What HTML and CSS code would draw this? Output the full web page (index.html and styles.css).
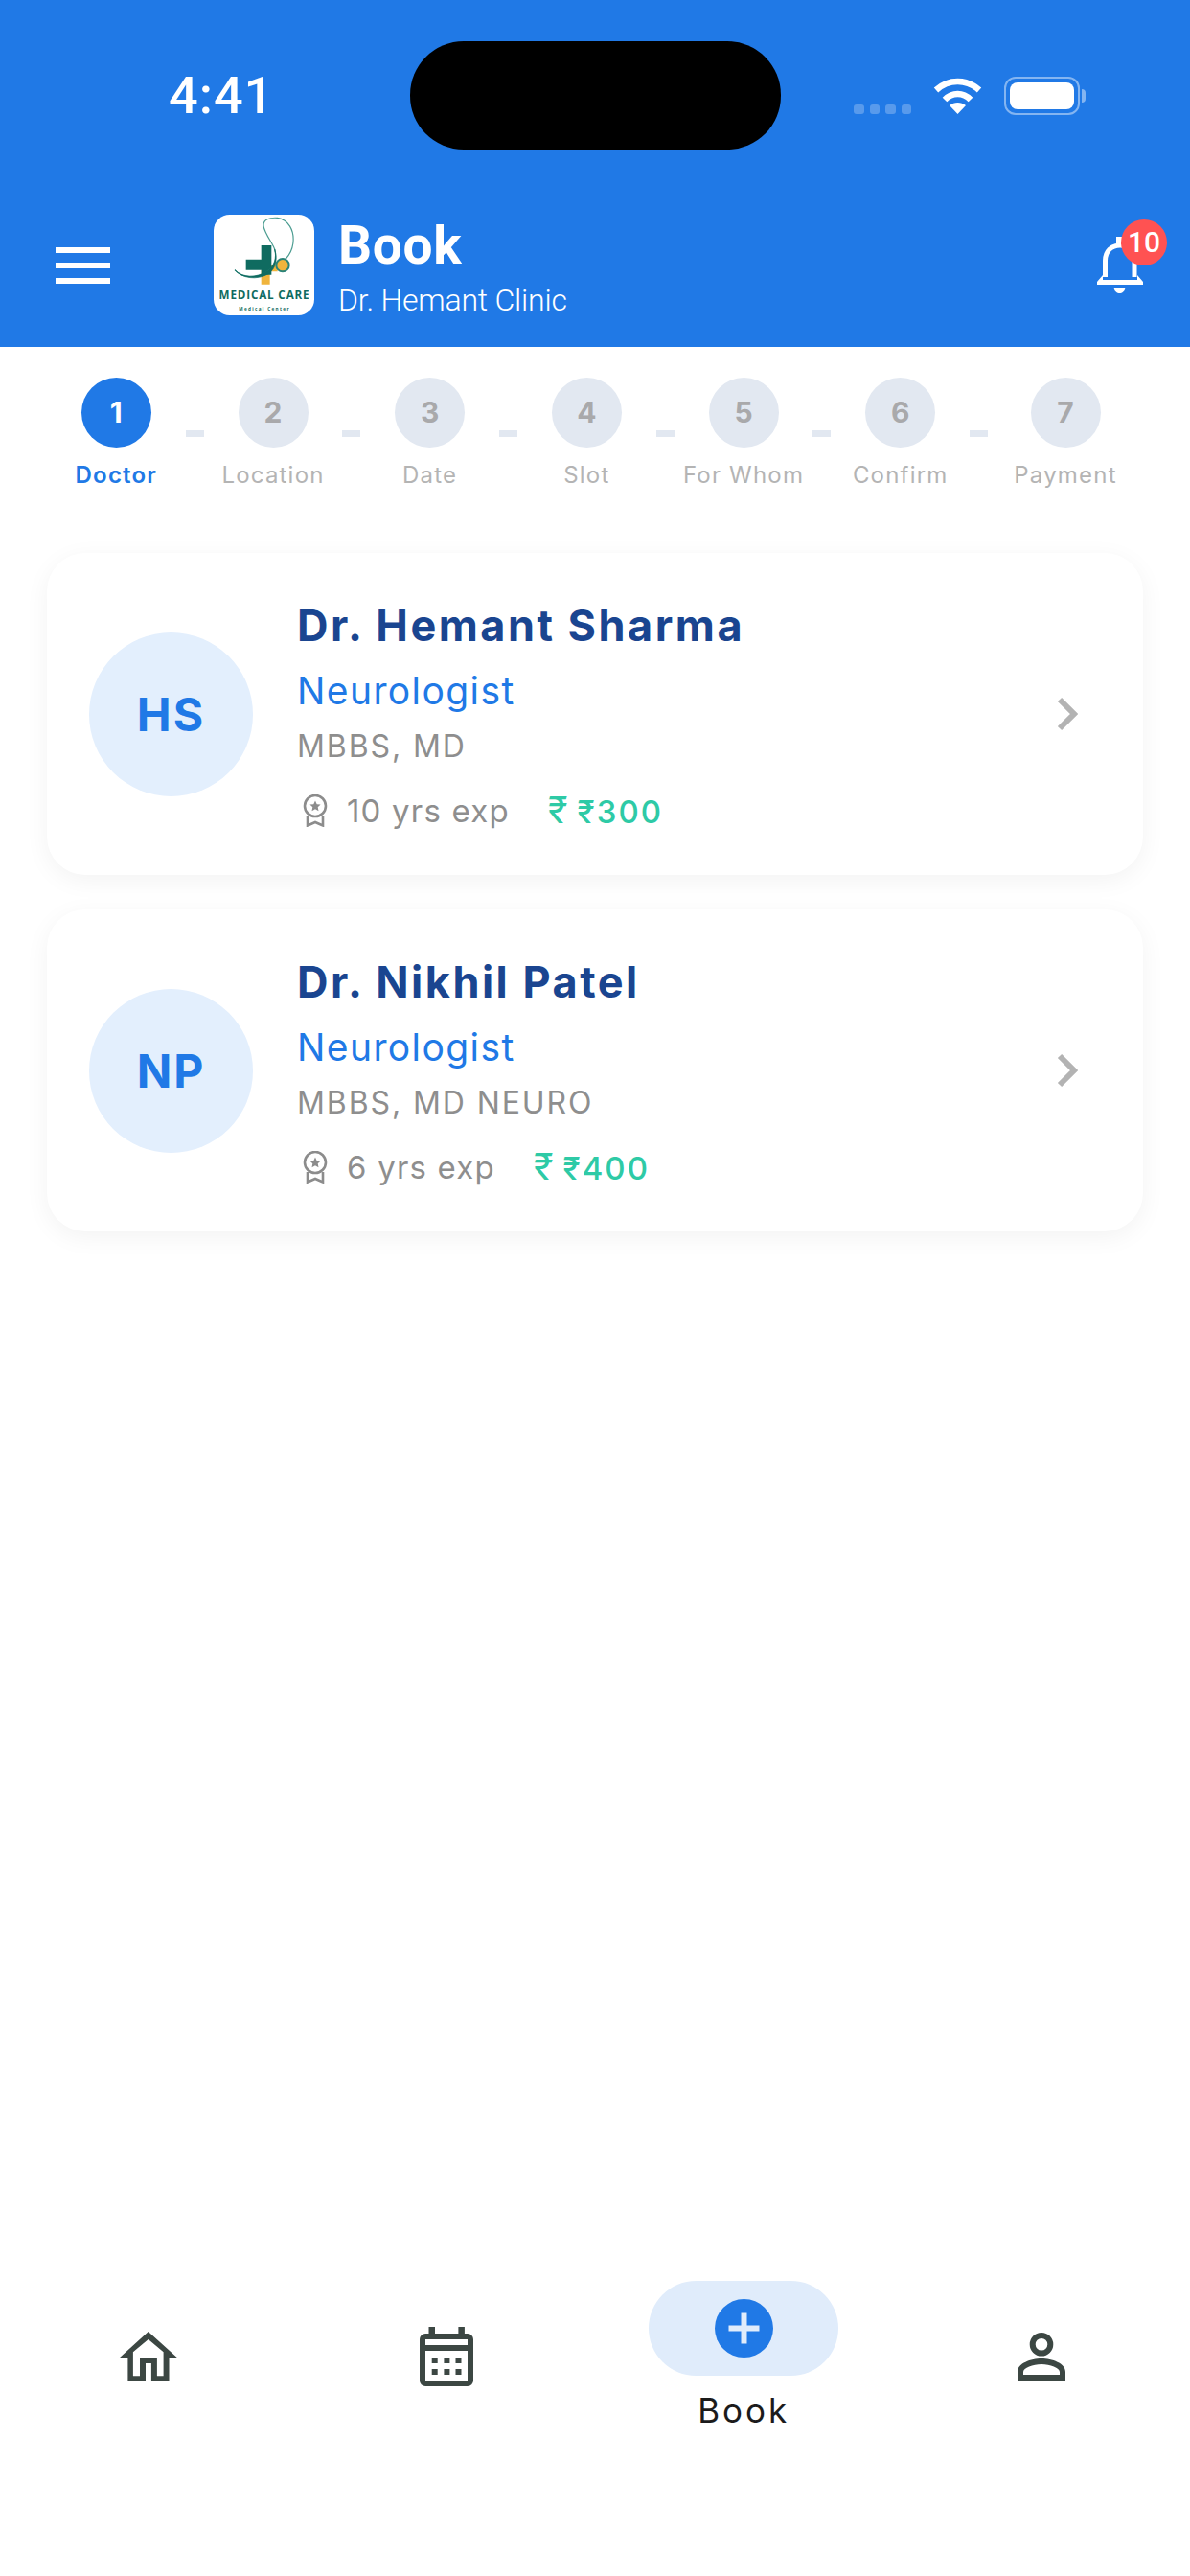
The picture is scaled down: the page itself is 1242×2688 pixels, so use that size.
FILE: index.html
```html
<!DOCTYPE html>
<html lang="en">
<head>
  <meta charset="UTF-8">
  <title>Book</title>
  <link rel="stylesheet" href="styles.css">
</head>
<body>

  <!-- Blue header -->
  <header class="header">
    <div class="statusbar">
      <div class="time">4:41</div>
      <div class="island"></div>
      <div class="status-icons">
        <div class="signal"><span></span><span></span><span></span><span></span></div>
        <svg class="wifi" viewBox="0 0 51 38">
          <path class="wifi-arc" d="M3 13C16 1 35 1 48 13"/>
          <path class="wifi-arc" d="M12 23C20 15 31 15 39 23"/>
          <path class="wifi-dot" d="M25.5 38L17 29C22 25 29 25 34 29Z"/>
        </svg>
        <div class="battery"><div class="battery-fill"></div></div>
        <div class="battery-nub"></div>
      </div>
    </div>

    <div class="topbar">
      <div class="menu"><span></span><span></span><span></span></div>
      <svg class="logo" viewBox="0 0 315 315">
        <rect width="315" height="315" rx="50" fill="#fff"/>
        <path d="M149 173H176V158H200V178H176V218H149Z" fill="#f0b43c"/>
        <path d="M149 96H181V188H149V173H101V140H149Z" fill="#0f6b60"/>
        <path d="M66 173C90 200 135 200 165 180C190 165 200 140 191 108C185 90 160 60 156 35C155 15 175 8 200 10C235 15 252 50 249 85C247 110 238 125 226 138" fill="none" stroke="#4a9c90" stroke-width="3.5"/>
        <path d="M66 173C90 198 135 198 165 178C190 162 198 135 191 108C198 135 200 165 170 186C135 205 90 200 66 173Z" fill="#0f6b60" stroke="#0f6b60" stroke-width="2"/>
        <circle cx="216" cy="158" r="20" fill="#f0b43c" stroke="#2a8377" stroke-width="6"/>
        <text class="logo-name" x="159" y="263">MEDICAL CARE</text>
        <text class="logo-sub" x="159" y="300">Medical Center</text>
      </svg>
      <div class="titles">
        <div class="title">Book</div>
        <div class="subtitle">Dr. Hemant Clinic</div>
      </div>
      <div class="bell">
        <svg class="bell-icon" viewBox="0 0 50 59">
          <path d="M21 0H28V9H21Z" fill="#fff"/>
          <path d="M9.5 42V25C9.5 15 16 9 25 9C34 9 40 15 40 25V42" fill="none" stroke="#fff" stroke-width="5"/>
          <path d="M1 47L7 40V45H43V40L49 47V50H1Z" fill="#fff"/>
          <path d="M18.5 53H30.5C30 57 27 59 24.5 59C22 59 19 57 18.5 53Z" fill="#fff"/>
        </svg>
        <div class="badge">10</div>
      </div>
    </div>
  </header>

  <!-- Booking steps -->
  <div class="steps">
    <div class="step active">
      <div class="step-num">1</div>
      <div class="step-label">Doctor</div>
    </div>
    <div class="step-line"></div>
    <div class="step">
      <div class="step-num">2</div>
      <div class="step-label">Location</div>
    </div>
    <div class="step-line"></div>
    <div class="step">
      <div class="step-num">3</div>
      <div class="step-label">Date</div>
    </div>
    <div class="step-line"></div>
    <div class="step">
      <div class="step-num">4</div>
      <div class="step-label">Slot</div>
    </div>
    <div class="step-line"></div>
    <div class="step">
      <div class="step-num">5</div>
      <div class="step-label">For Whom</div>
    </div>
    <div class="step-line"></div>
    <div class="step">
      <div class="step-num">6</div>
      <div class="step-label">Confirm</div>
    </div>
    <div class="step-line"></div>
    <div class="step step-last">
      <div class="step-num">7</div>
      <div class="step-label">Payment</div>
    </div>
  </div>

  <!-- Doctors -->
  <main class="doctors">
    <div class="card">
      <div class="avatar">HS</div>
      <div class="info">
        <div class="name">Dr. Hemant Sharma</div>
        <div class="speciality">Neurologist</div>
        <div class="degree">MBBS, MD</div>
        <div class="meta">
          <svg class="award" viewBox="0 0 28 34">
            <circle cx="14" cy="12" r="11" fill="none" stroke="#8c8c8c" stroke-width="2.6"/>
            <path d="M14 6.5L15.7 10.2L19.6 10.6L16.7 13.2L17.5 17.2L14 15.2L10.5 17.2L11.3 13.2L8.4 10.6L12.3 10.2Z" fill="#8c8c8c"/>
            <path d="M6 22V32.5L14 29L22 32.5V22" fill="none" stroke="#8c8c8c" stroke-width="2.6"/>
          </svg>
          <span class="exp">10 yrs exp</span>
          <span class="fee"><span class="fee-icon">₹</span>₹300</span>
        </div>
      </div>
      <svg class="chevron" viewBox="0 0 22 36"><path d="M3 3L18 18L3 33" fill="none" stroke="#b3b3b3" stroke-width="6"/></svg>
    </div>

    <div class="card">
      <div class="avatar">NP</div>
      <div class="info">
        <div class="name">Dr. Nikhil Patel</div>
        <div class="speciality">Neurologist</div>
        <div class="degree">MBBS, MD NEURO</div>
        <div class="meta">
          <svg class="award" viewBox="0 0 28 34">
            <circle cx="14" cy="12" r="11" fill="none" stroke="#8c8c8c" stroke-width="2.6"/>
            <path d="M14 6.5L15.7 10.2L19.6 10.6L16.7 13.2L17.5 17.2L14 15.2L10.5 17.2L11.3 13.2L8.4 10.6L12.3 10.2Z" fill="#8c8c8c"/>
            <path d="M6 22V32.5L14 29L22 32.5V22" fill="none" stroke="#8c8c8c" stroke-width="2.6"/>
          </svg>
          <span class="exp">6 yrs exp</span>
          <span class="fee"><span class="fee-icon">₹</span>₹400</span>
        </div>
      </div>
      <svg class="chevron" viewBox="0 0 22 36"><path d="M3 3L18 18L3 33" fill="none" stroke="#b3b3b3" stroke-width="6"/></svg>
    </div>
  </main>

  <!-- Bottom navigation -->
  <nav class="tabs">
    <div class="tab">
      <svg class="tab-home" viewBox="0 0 60 52">
        <path fill-rule="evenodd" fill="#3c4743" d="M29.8 0L59.8 27H51.5V52H32.9V33H27V52H8.4V27H0ZM29.8 8L13.9 21.3V46.3H21V27H38.9V46.3H45.6V21.3Z"/>
      </svg>
    </div>
    <div class="tab">
      <svg class="tab-calendar" viewBox="0 0 56 62">
        <rect x="9.5" y="0" width="6.5" height="9" fill="#3c4743"/>
        <rect x="40.4" y="0" width="6.5" height="9" fill="#3c4743"/>
        <rect x="3" y="10" width="50" height="49" rx="3" fill="none" stroke="#3c4743" stroke-width="6"/>
        <rect x="3" y="19" width="50" height="6" fill="#3c4743"/>
        <rect x="12.7" y="32" width="6" height="6" fill="#3c4743"/>
        <rect x="25.4" y="32" width="6" height="6" fill="#3c4743"/>
        <rect x="37.5" y="32" width="6" height="6" fill="#3c4743"/>
        <rect x="12.7" y="44" width="6" height="6" fill="#3c4743"/>
        <rect x="25.4" y="44" width="6" height="6" fill="#3c4743"/>
        <rect x="37.5" y="44" width="6" height="6" fill="#3c4743"/>
      </svg>
    </div>
    <div class="tab">
      <div class="tab-pill">
        <svg class="tab-plus" viewBox="0 0 61 61">
          <circle cx="30.5" cy="30.5" r="30.5" fill="#2079e6"/>
          <path d="M14.5 27.5H27.5V14.5H33.5V27.5H46.5V33.5H33.5V46.5H27.5V33.5H14.5Z" fill="#e0ecfb"/>
        </svg>
      </div>
      <div class="tab-label">Book</div>
    </div>
    <div class="tab">
      <svg class="tab-person" viewBox="0 0 50 50">
        <path fill-rule="evenodd" fill="#3c4743" d="M25 0A12.3 12.3 0 1 1 25 24.6A12.3 12.3 0 1 1 25 0ZM25 6A6.3 6.3 0 1 0 25 18.6A6.3 6.3 0 1 0 25 6ZM0 50V41C0 32 14 27 25 27C36 27 50 32 50 41V50ZM6 44H44V41C44 37 34 33 25 33C16 33 6 37 6 41Z"/>
      </svg>
    </div>
  </nav>

</body>
</html>
```

FILE: styles.css
```css
/* ===== Page ===== */
* {
  box-sizing: border-box;
}

body {
  margin: 0;
  width: 1242px;
  height: 2688px;
  display: flex;
  flex-direction: column;
  background-color: #ffffff;
  font-family: 'Inter', 'Liberation Sans', sans-serif;
  overflow: hidden;
}

/* ===== Header ===== */
.header {
  height: 362px;
  padding-top: 43px;
  background-color: #2079e6;
  color: #ffffff;
  font-family: 'Roboto', sans-serif;
}

.statusbar {
  display: flex;
  align-items: center;
  height: 113px;
}

.time {
  width: 428px;
  padding-left: 176px;
  font-size: 54px;
  font-weight: 500;
  letter-spacing: 1px;
}

.island {
  width: 387px;
  height: 113px;
  border-radius: 56px;
  background-color: #000000;
}

.status-icons {
  display: flex;
  align-items: flex-end;
  height: 40px;
  padding-left: 76px;
}

.signal {
  display: flex;
  gap: 6px;
  margin-bottom: 1px;
}

.signal span {
  width: 10.5px;
  height: 10px;
  border-radius: 3px;
  background-color: rgba(255, 255, 255, 0.25);
}

.wifi {
  width: 51px;
  height: 38px;
  margin: 0 23px 1px 23px;
}

.wifi-arc {
  fill: none;
  stroke: #ffffff;
  stroke-width: 6.5;
}

.wifi-dot {
  fill: #ffffff;
}

.battery {
  width: 79px;
  height: 40px;
  padding: 4px;
  border: 2.5px solid rgba(255, 255, 255, 0.45);
  border-radius: 12px;
}

.battery-fill {
  height: 100%;
  border-radius: 8px;
  background-color: #ffffff;
}

.battery-nub {
  width: 4px;
  height: 14px;
  margin: 0 0 13px 2px;
  border-radius: 0 4px 4px 0;
  background-color: rgba(255, 255, 255, 0.45);
}

.topbar {
  display: flex;
  align-items: center;
  height: 105px;
  margin-top: 68px;
  padding: 0 48px 0 58px;
}

.menu {
  display: flex;
  flex-direction: column;
  gap: 10px;
  width: 57px;
  margin-right: 108px;
}

.menu span {
  height: 6px;
  background-color: #ffffff;
}

.logo {
  width: 105px;
  height: 105px;
  margin-right: 25px;
}

.logo-name {
  font-family: 'Open Sans', sans-serif;
  font-size: 35px;
  font-weight: 700;
  letter-spacing: 2.5px;
  fill: #0f6b60;
  text-anchor: middle;
}

.logo-sub {
  font-family: 'Open Sans', sans-serif;
  font-size: 14px;
  font-weight: 700;
  letter-spacing: 4px;
  fill: #0f6b60;
  text-anchor: middle;
}

.titles {
  padding-top: 4px;
}

.title {
  font-size: 55px;
  font-weight: 700;
  letter-spacing: 0.7px;
  line-height: 60px;
}

.subtitle {
  margin-top: 8px;
  font-size: 32px;
  font-weight: 300;
  letter-spacing: -0.2px;
  line-height: 38px;
}

.bell {
  position: relative;
  width: 50px;
  height: 59px;
  margin-left: auto;
}

.bell-icon {
  display: block;
  width: 50px;
  height: 59px;
}

.badge {
  position: absolute;
  top: -18px;
  right: -24px;
  width: 48px;
  height: 48px;
  border-radius: 50%;
  background-color: #ff5252;
  font-size: 30px;
  font-weight: 500;
  line-height: 48px;
  text-align: center;
}

/* ===== Steps ===== */
.steps {
  display: flex;
  padding: 32px 49px 0;
}

.step {
  display: flex;
  flex: 1;
  flex-direction: column;
  align-items: center;
  white-space: nowrap;
}

.step-last {
  flex: 0 0 162px;
}

.step-num {
  width: 73px;
  height: 73px;
  border-radius: 50%;
  background-color: #e2e8f1;
  color: #a9a9ab;
  font-size: 30px;
  font-weight: 700;
  line-height: 73px;
  text-align: center;
}

.step-label {
  margin-top: 14px;
  color: #b4b4b4;
  font-size: 24px;
  letter-spacing: 1.2px;
  line-height: 30px;
}

.step-line {
  flex: 0 0 19px;
  height: 7px;
  margin-top: 55px;
  background-color: #e2e8f1;
}

.active .step-num {
  background-color: #2079e6;
  color: #ffffff;
}

.active .step-label {
  color: #2079e6;
  font-weight: 600;
}

/* ===== Doctor cards ===== */
.doctors {
  display: flex;
  flex-direction: column;
  gap: 36px;
  padding: 66px 49px 0;
}

.card {
  display: flex;
  align-items: center;
  height: 336px;
  padding: 0 68px 0 44px;
  border-radius: 40px;
  background-color: #ffffff;
  box-shadow: 0 6px 26px rgba(0, 0, 0, 0.05);
}

.avatar {
  flex: 0 0 171px;
  height: 171px;
  margin-right: 46px;
  border-radius: 50%;
  background-color: #e3effd;
  color: #2079e6;
  font-size: 48px;
  font-weight: 700;
  letter-spacing: 2px;
  line-height: 171px;
  text-align: center;
}

.info {
  flex: 1;
  padding-top: 3px;
}

.name {
  color: #1a4590;
  font-size: 45px;
  font-weight: 700;
  letter-spacing: 2.5px;
  line-height: 54px;
}

.speciality {
  margin-top: 18px;
  color: #2079e6;
  font-size: 39px;
  letter-spacing: 1.4px;
  line-height: 46px;
}

.degree {
  margin-top: 15px;
  color: #8e8e8e;
  font-size: 32px;
  letter-spacing: 1.9px;
  line-height: 40px;
}

.meta {
  display: flex;
  align-items: center;
  margin-top: 26px;
  padding-left: 4px;
}

.award {
  width: 30px;
  height: 34px;
  margin-right: 18px;
}

.exp {
  color: #8e8e8e;
  font-size: 33px;
  letter-spacing: 1.2px;
  line-height: 40px;
}

.fee {
  margin-left: 40px;
  color: #2ecaa6;
  font-size: 33px;
  font-weight: 500;
  letter-spacing: 2px;
  line-height: 40px;
}

.fee-icon {
  margin-right: 8px;
  font-size: 38px;
  font-weight: 400;
}

.chevron {
  flex: 0 0 22px;
  height: 36px;
}

/* ===== Bottom tabs ===== */
.tabs {
  display: grid;
  grid-template-columns: repeat(4, 1fr);
  align-items: center;
  height: 158px;
  margin-top: auto;
  margin-bottom: 150px;
}

.tab {
  display: flex;
  flex-direction: column;
  align-items: center;
}

.tab-home {
  width: 60px;
  height: 52px;
}

.tab-calendar {
  width: 56px;
  height: 62px;
}

.tab-person {
  width: 50px;
  height: 50px;
}

.tab-pill {
  display: flex;
  align-items: center;
  justify-content: center;
  width: 198px;
  height: 99px;
  border-radius: 50px;
  background-color: #e0ecfb;
}

.tab-plus {
  width: 61px;
  height: 61px;
}

.tab-label {
  margin-top: 13px;
  color: #1b1b1b;
  font-size: 35px;
  letter-spacing: 3px;
  line-height: 46px;
}
```
